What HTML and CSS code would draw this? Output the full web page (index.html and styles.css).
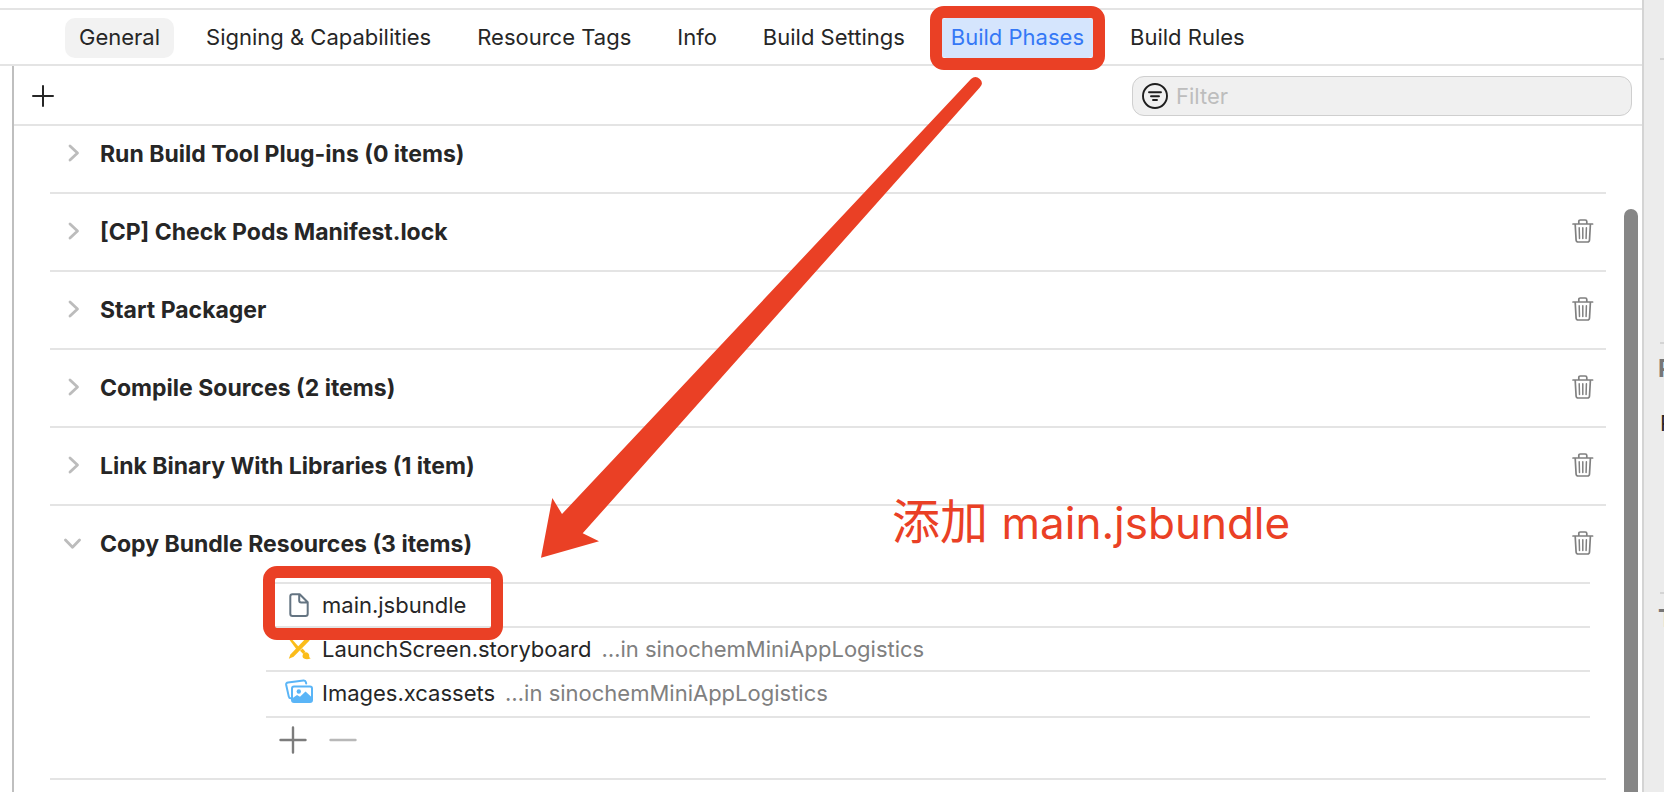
FILE: index.html
```html
<!DOCTYPE html>
<html lang="en">
<head>
<meta charset="utf-8">
<title>Build Phases</title>
<link rel="stylesheet" href="styles.css">
</head>
<body>
<svg class="symbols" aria-hidden="true">
  <symbol id="chevron" viewBox="0 0 20 20"><path d="M6 2l7.500 7L6 16" fill="none" stroke="#bcbcbc" stroke-width="2.800" stroke-linecap="round" stroke-linejoin="round"/></symbol>
  <symbol id="trash" viewBox="0 0 24 26"><g fill="none" stroke="#808080" stroke-width="1.700" stroke-linecap="round" stroke-linejoin="round"><path d="M3 5h19.600M8.800 4.600V2.600Q8.800 1 10.400 1h4.800q1.600 0 1.600 1.600v2M5.200 5.200l.9 15.800q.1 2 2.100 2h9.200q2 0 2.100-2l.9-15.800"/><path d="M9.200 8.800l.3 10.800M12.800 8.800v10.800M16.400 8.800l-.3 10.800" stroke-width="1.500"/></g></symbol>
</svg>
<div class="workspace">
  <main class="editor">
    <nav class="tabs">
      <button class="tab tab-hover" type="button">General</button>
      <button class="tab" type="button">Signing &amp; Capabilities</button>
      <button class="tab" type="button">Resource Tags</button>
      <button class="tab" type="button">Info</button>
      <button class="tab" type="button">Build Settings</button>
      <button class="tab tab-active" type="button">Build Phases<span class="marker marker-tab"></span></button>
      <button class="tab" type="button">Build Rules</button>
    </nav>
    <div class="content">
      <div class="toolbar">
        <button class="icon-button" type="button" aria-label="Add phase"><svg width="24" height="24" viewBox="0 0 24 24"><path d="M12 2v20M2 12h20" stroke="#262626" stroke-width="2" stroke-linecap="round"/></svg></button>
        <label class="filter">
          <svg width="26" height="26" viewBox="0 0 26 26"><g fill="none" stroke="#1e1e1e" stroke-width="1.900" stroke-linecap="round"><circle cx="13" cy="13" r="12"/><path d="M7 9.200h12M9 13.200h8M11 17h4"/></g></svg>
          <input type="text" placeholder="Filter" aria-label="Filter">
        </label>
      </div>
      <div class="phases">
        <section class="phase phase-scrolled"><button class="icon-button chevron" type="button" aria-label="Expand"><svg width="20" height="20"><use href="#chevron"/></svg></button><h2>Run Build Tool Plug-ins (0 items)</h2></section>
        <section class="phase"><button class="icon-button chevron" type="button" aria-label="Expand"><svg width="20" height="20"><use href="#chevron"/></svg></button><h2>[CP] Check Pods Manifest.lock</h2><button class="icon-button trash" type="button" aria-label="Delete"><svg width="24" height="26"><use href="#trash"/></svg></button></section>
        <section class="phase"><button class="icon-button chevron" type="button" aria-label="Expand"><svg width="20" height="20"><use href="#chevron"/></svg></button><h2>Start Packager</h2><button class="icon-button trash" type="button" aria-label="Delete"><svg width="24" height="26"><use href="#trash"/></svg></button></section>
        <section class="phase"><button class="icon-button chevron" type="button" aria-label="Expand"><svg width="20" height="20"><use href="#chevron"/></svg></button><h2>Compile Sources (2 items)</h2><button class="icon-button trash" type="button" aria-label="Delete"><svg width="24" height="26"><use href="#trash"/></svg></button></section>
        <section class="phase"><button class="icon-button chevron" type="button" aria-label="Expand"><svg width="20" height="20"><use href="#chevron"/></svg></button><h2>Link Binary With Libraries (1 item)</h2><button class="icon-button trash" type="button" aria-label="Delete"><svg width="24" height="26"><use href="#trash"/></svg></button></section>
        <section class="phase phase-open"><button class="icon-button chevron" type="button" aria-label="Collapse"><svg width="20" height="20" viewBox="0 0 20 20"><path d="M1.500 6l7 7.200 7-7.200" fill="none" stroke="#bcbcbc" stroke-width="2.800" stroke-linecap="round" stroke-linejoin="round"/></svg></button><h2>Copy Bundle Resources (3 items)</h2><button class="icon-button trash" type="button" aria-label="Delete"><svg width="24" height="26"><use href="#trash"/></svg></button></section>
        <div class="resources">
          <ul class="files">
            <li class="file">
              <svg width="28" height="28" viewBox="0 0 28 28"><path d="M7.500 3.200h7.200l8 8v11.600q0 2.200-2.200 2.200H7.500q-2.200 0-2.200-2.200V5.400q0-2.200 2.200-2.200zM14.200 3.400v6.200q0 1.900 1.900 1.900h6.400" fill="none" stroke="#647482" stroke-width="2" stroke-linejoin="round"/></svg>
              <span>main.jsbundle</span><span class="marker marker-file"></span>
            </li>
            <li class="file">
              <svg width="28" height="28" viewBox="0 0 28 28"><g fill="#fbbc1a"><path d="M3.500 3.500L6.500 3.800l8.500 9.400-2.500 2.500z"/><path d="M21.600 2.400l3 3L8.600 21.800 3.800 23.800l1.600-4.400z"/><path d="M15 15.800l2.600-2.400 2.800 3.400-2.200 2.200z"/><path d="M18.400 18.200q2.800-2 5 .4 1.100 1.200.8 2.800.2 1.400 1.600 1.800-3.600 2-6.800.4-2.600-1.800-.6-5.400z"/></g></svg>
              <span>LaunchScreen.storyboard</span><span class="location">…in sinochemMiniAppLogistics</span>
            </li>
            <li class="file">
              <svg width="28" height="28" viewBox="0 0 28 28"><g fill="none" stroke="#5ab5f7" stroke-width="2" stroke-linejoin="round" stroke-linecap="round"><path d="M6.400 19.300q-2.200.3-2.600-1.700L1.200 6Q.9 3.700 3 3.400L18.500 1.500q2-.2 2.400 1.700l.3 1.300"/><rect x="7" y="7.500" width="20" height="15.500" rx="2"/></g><circle cx="13.800" cy="12.500" r="2.200" fill="#5ab5f7"/><path d="M7 19.500l5-3.500 3 1.800 5.500-5.300 6.500 6V23H7z" fill="#5ab5f7"/></svg>
              <span>Images.xcassets</span><span class="location">…in sinochemMiniAppLogistics</span>
            </li>
          </ul>
          <div class="file-actions">
            <button class="icon-button" type="button" aria-label="Add file"><svg width="28" height="28" viewBox="0 0 28 28"><path d="M14 1.500v25M1.500 14h25" stroke="#7c7c7c" stroke-width="2.400" stroke-linecap="round"/></svg></button>
            <button class="icon-button" type="button" aria-label="Remove file"><svg width="28" height="28" viewBox="0 0 28 28"><path d="M1.500 14h25" stroke="#b8b8b8" stroke-width="2.400" stroke-linecap="round"/></svg></button>
          </div>
        </div>
      </div>
      <div class="scroll-thumb"></div>
    </div>
  </main>
  <aside class="inspector">
    <div class="group group-file"></div>
    <div class="group group-project"><h3>P</h3><p>P</p></div>
    <div class="group"><h3>T</h3></div>
  </aside>
  <svg class="arrow" width="460" height="490" viewBox="530 72 460 490" aria-hidden="true"><path d="M971 79Q975.500 75 979.800 79T979.800 87.500L582.700 533.300 599 541.200 541 557.800 552.300 498 562 514z" fill="#ea4025"/></svg>
  <p class="note" lang="zh">添加 <span>main.jsbundle</span></p>
</div>
</body>
</html>
```
FILE: styles.css
```css
* { box-sizing: border-box; }
body {
  margin: 0;
  background: #fff;
  color: #262626;
  font-family: Inter, "Noto Sans CJK SC", sans-serif;
  font-size: 22px;
  line-height: 28px;
}
button, input { font: inherit; color: inherit; }
h2, h3, p, ul { margin: 0; padding: 0; font-size: inherit; }
.symbols { position: absolute; width: 0; height: 0; }
.workspace {
  position: relative;
  display: flex;
  height: 100vh;
  overflow: hidden;
}
.editor {
  flex: 1;
  min-width: 0;
  display: flex;
  flex-direction: column;
  padding-top: 8px;
  border-right: 2px solid #d4d4d4;
}
.tabs {
  display: flex;
  gap: 18px;
  padding: 8px 0 6px 65px;
  border-top: 2px solid #e4e4e4;
  border-bottom: 2px solid #e4e4e4;
}
.tab {
  position: relative;
  padding: 5px 14px 7px;
  border: 0;
  border-radius: 10px;
  background: none;
  white-space: nowrap;
}
.tab-hover { background: #f2f2f2; }
.tab-active { background: #d5e5fd; color: #3478f6; }
.marker {
  position: absolute;
  z-index: 1;
  border: 12px solid #ea4025;
  border-radius: 14px;
  pointer-events: none;
}
.marker-tab { inset: -12px -7px; }
.marker-file { left: -3px; top: -18px; width: 240px; height: 74px; }
.content {
  position: relative;
  flex: 1;
  min-height: 0;
  margin-left: 12px;
  border-left: 2px solid #bfbfbf;
  display: flex;
  flex-direction: column;
}
.toolbar {
  display: flex;
  align-items: center;
  justify-content: space-between;
  padding: 10px 10px 8px 17px;
  border-bottom: 2px solid #e4e4e4;
}
.icon-button {
  display: flex;
  padding: 0;
  border: 0;
  background: none;
}
.filter {
  display: flex;
  align-items: center;
  gap: 8px;
  width: 500px;
  height: 40px;
  padding: 0 9px;
  border: 1px solid #cfcfcf;
  border-radius: 12px;
  background: #f0f0f0;
}
.filter input {
  flex: 1;
  min-width: 0;
  padding: 0;
  border: 0;
  outline: 0;
  background: none;
}
.filter input::placeholder { color: #bdbdbd; opacity: 1; }
.phases {
  flex: 1;
  overflow: hidden;
  padding: 0 36px;
}
.phase {
  display: flex;
  align-items: center;
  min-height: 78px;
  padding: 0 12px 0 14px;
  border-bottom: 2px solid #e4e4e4;
}
.phase-scrolled { margin-top: -10px; }
.phase-open { border-bottom: 0; min-height: 76px; }
.phase h2 { flex: 1; margin-left: 16px; font-size: 23px; font-weight: 700; }
.resources {
  padding-left: 216px;
  border-bottom: 2px solid #e4e4e4;
}
.files { list-style: none; margin-right: 16px; }
.file {
  position: relative;
  display: flex;
  align-items: center;
  height: 44px;
  padding-left: 19px;
  border-top: 2px solid #e4e4e4;
}
.file svg { margin-right: 9px; }
.file:last-child { height: 48px; padding-bottom: 2px; border-bottom: 2px solid #e4e4e4; }
.location { margin-left: 10px; color: #808080; }
.file-actions {
  display: flex;
  gap: 22px;
  padding: 8px 0 24px 13px;
}
.scroll-thumb {
  position: absolute;
  right: 4px;
  top: 143px;
  bottom: -8px;
  width: 14px;
  border-radius: 7px;
  background: #868686;
}
.inspector {
  width: 20px;
  overflow: hidden;
  padding: 58px 0 0 16px;
  background: #ececec;
}
.group { height: 250px; border-top: 2px solid #d4d4d4; }
.group-file { height: 284px; }
.group h3 { margin: 11px 0 26px -2px; color: #767676; font-size: 24px; font-weight: 700; }
.arrow { position: absolute; left: 530px; top: 72px; }
.note {
  position: absolute;
  left: 892px;
  top: 492px;
  color: #ea4025;
  font-size: 48px;
  line-height: 60px;
  white-space: nowrap;
}
.note span { font-size: 44px; }
```
